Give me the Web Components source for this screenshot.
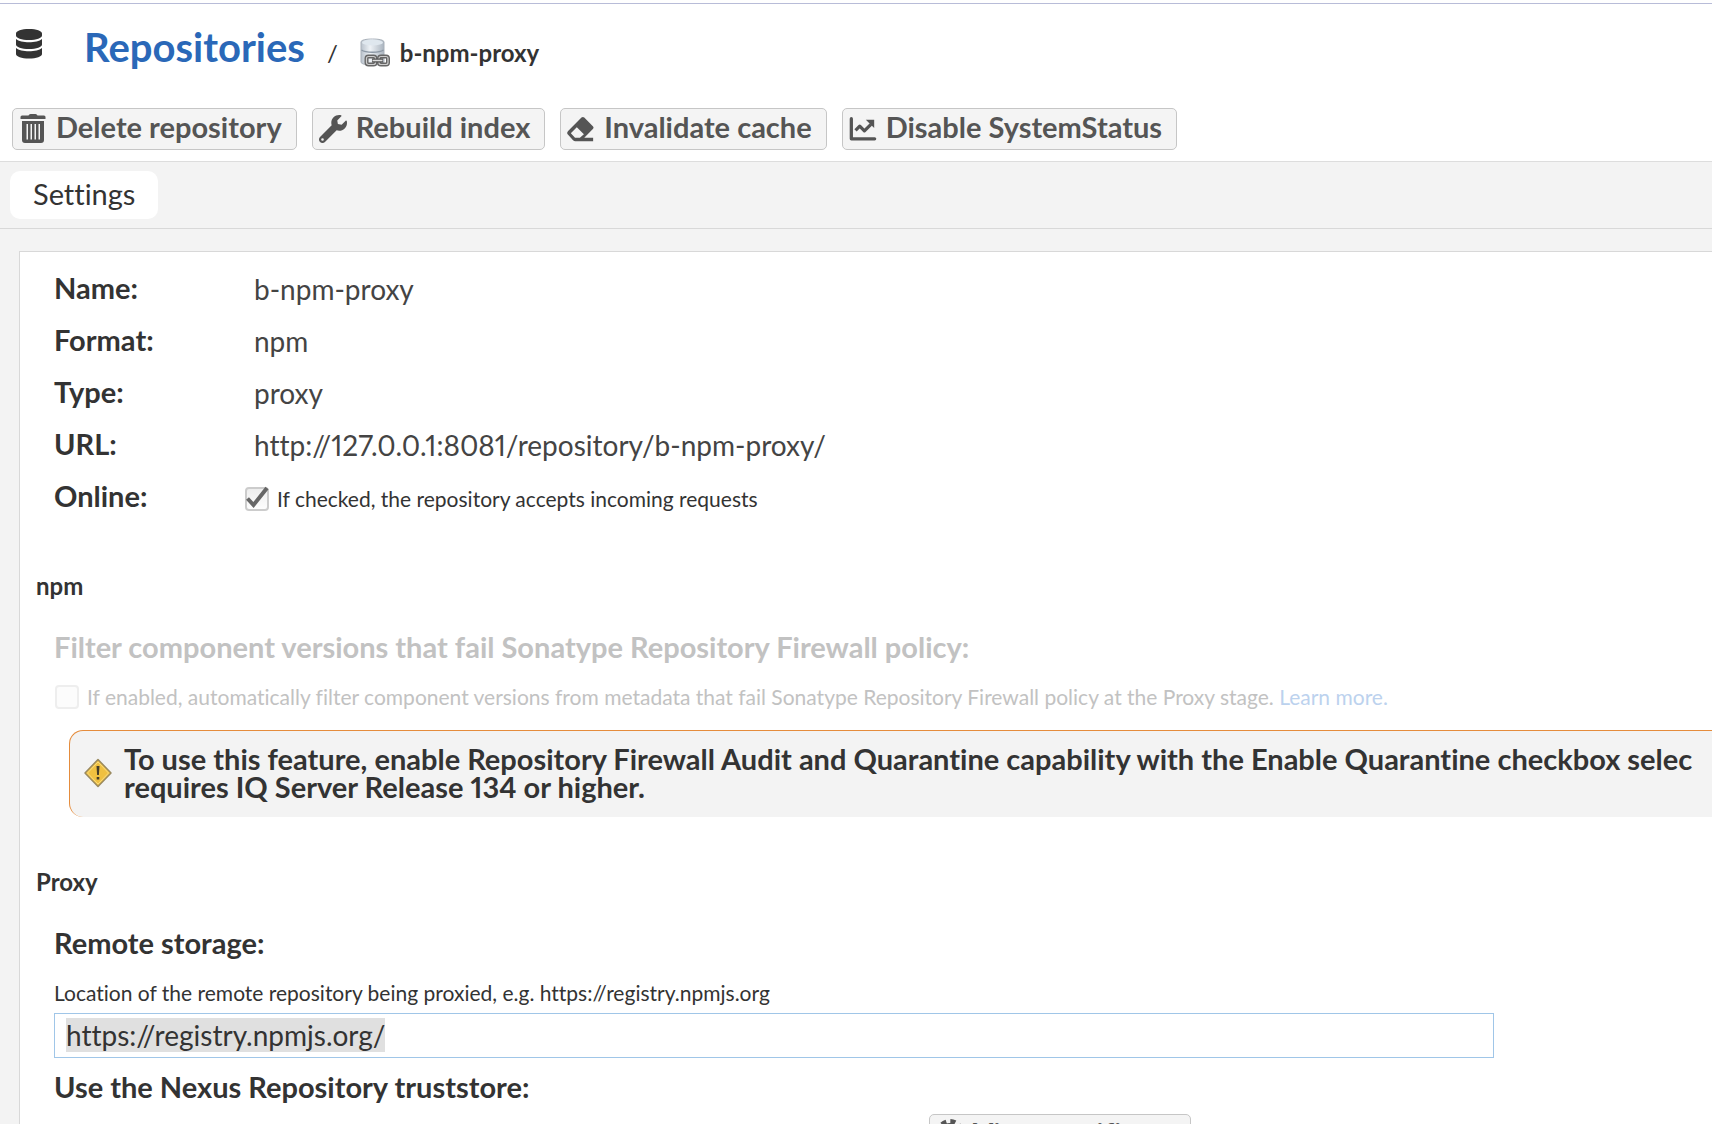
<!DOCTYPE html>
<html lang="en">
<head>
<meta charset="utf-8">
<title>Repositories / b-npm-proxy</title>
<style>
html, body { margin: 0; height: 100%; overflow: hidden; }
body { background: #fff; color: #333; font-family: Lato, "Open Sans", sans-serif; font-size: 28px; font-variant-ligatures: none; font-variant-numeric: proportional-nums; }
</style>
</head>
<body>
<nx-page></nx-page>
<script>
const define = (name, html, setup) => {
  const tpl = document.createElement('template');
  tpl.innerHTML = html;
  customElements.define(name, class extends HTMLElement {
    constructor() {
      super();
      this.attachShadow({ mode: 'open' }).append(tpl.content.cloneNode(true));
    }
    connectedCallback() { if (setup) setup(this, this.shadowRoot); }
  });
};

const icons = {
  database: '<svg viewBox="0 0 26 30"><path fill="#333" d="M0 4.500C0 2 5.500 0 13 0s13 2 13 4.500v2C26 9 20.500 11 13 11S0 9 0 6.500zM0 10c2.500 2.200 7.500 3.200 13 3.200S23.500 12.200 26 10v5.500c0 2.500-5.500 4.500-13 4.500S0 18 0 15.500zM0 19c2.500 2.200 7.500 3.200 13 3.200S23.500 21.200 26 19v6c0 2.500-5.500 4.500-13 4.500S0 27.500 0 25z"/></svg>',
  trash: '<svg viewBox="0 0 28 30"><path fill="#555" fill-rule="evenodd" d="M9.500 1.500Q10 0 11.500 0h5Q18 0 18.500 1.500H25q1.500 0 1.500 1.500v2h-25V3Q1.500 1.500 3 1.500zM3 7h22v19q0 3-3 3H6q-3 0-3-3zm4.500 3v15.500H9V10zm4 0v15.500H13V10zm4 0v15.500H17V10zm4 0v15.500H21V10z"/></svg>',
  wrench: '<svg viewBox="0 0 512 512"><path fill="#555" d="M507.700 109.100c-2.200-9-13.500-12.100-20.100-5.500l-74.400 74.400-67.900-11.300L334 98.900l74.400-74.400c6.600-6.600 3.400-17.900-5.700-20.200-47.400-11.700-99.600.9-136.600 37.900-39.600 39.600-50.500 97.100-34.100 147.200L18.700 402.800c-25 25-25 65.500 0 90.500s65.500 25 90.500 0l213.200-213.200c50.100 16.700 107.500 5.700 147.400-34.200 37.100-37.100 49.700-89.300 37.900-136.800zM64 472a24 24 0 1 1 0-48 24 24 0 0 1 0 48z"/></svg>',
  eraser: '<svg viewBox="0 0 30 28"><path fill="#555" fill-rule="evenodd" d="M15.500 1.800q1.500-1.500 3 0l9.200 9.200q1.500 1.500 0 3L18.500 23.500H28V27H9q-1.500 0-2.500-1L1.200 20.200q-2-2 0-4zM10.500 12 4.600 17.900q-.6.600 0 1.200l4 4.400h5.200l4.300-4z"/></svg>',
  chart: '<svg viewBox="0 0 30 26"><path fill="none" stroke="#555" stroke-width="3.500" stroke-linecap="round" stroke-linejoin="round" d="M2.500 2v21.500h25"/><path fill="none" stroke="#555" stroke-width="3.500" stroke-linejoin="round" d="M7 14.500l4.500-4.500 5 5 7-7"/><path fill="#555" d="M18 3h9v9z"/></svg>',
  cog: '<svg viewBox="0 0 28 28" preserveAspectRatio="xMidYMin"><circle cx="14" cy="14" r="7.500" fill="none" stroke="#555" stroke-width="5"/><circle cx="14" cy="14" r="11.500" fill="none" stroke="#555" stroke-width="5" stroke-dasharray="5 4.032"/></svg>'
};

define('nx-icon', `
<style>
:host { display: block; flex: none; width: var(--w, 28px); height: var(--h, 28px); }
svg { display: block; width: 100%; height: 100%; }
</style>`, (el, root) => {
  if (!root.querySelector('svg')) root.innerHTML += icons[el.getAttribute('name')];
});

define('nx-button', `
<style>
:host { display: block; flex: none; }
button { display: flex; align-items: center; gap: 9px; box-sizing: border-box; height: 42px; padding: 0 14px 0 6px;
  background: #f4f4f4; border: 1px solid #c6c6c6; border-radius: 5px; color: #555; font: bold 29px/36px Lato, sans-serif; font-variant-ligatures: none; white-space: nowrap; }
.text { padding-bottom: 4px; }
</style>
<button type="button"><slot name="icon"></slot><span class="text"><slot></slot></span></button>`);

define('nx-header', `
<style>
:host { display: block; border-top: 1px solid #b8bcd8; }
.crumbs { display: flex; align-items: baseline; height: 84px; padding: 0 16px; }
.db { align-self: flex-start; margin: 25px 42px 0 0; --w: 26px; --h: 30px; }
a { color: #2a68b8; text-decoration: none; font-weight: bold; font-size: 40px; line-height: 86px; }
.sep { font-size: 24px; margin: 0 22px; }
.here { display: flex; align-items: baseline; gap: 10px; margin: 0; font-size: 24px; line-height: 32px; }
.here svg { align-self: center; width: 30px; height: 30px; }
.actions { display: flex; gap: 15px; padding: 20px 12px 11px; }
</style>
<nav class="crumbs" aria-label="Breadcrumb">
  <nx-icon class="db" name="database"></nx-icon>
  <a href="#repositories">Repositories</a>
  <span class="sep">/</span>
  <h1 class="here">
    <svg viewBox="0 0 30 30">
      <defs><linearGradient id="g"><stop offset="0" stop-color="#b9c2cc"/><stop offset=".4" stop-color="#eef2f6"/><stop offset="1" stop-color="#aab4bf"/></linearGradient></defs>
      <path fill="url(#g)" stroke="#a9b1ba" d="M1 4C1 2 6 1 12.500 1S24 2 24 4v20c0 2-5 3-11.500 3S1 26 1 24z"/>
      <ellipse cx="12.500" cy="4.500" rx="10.500" ry="3" fill="#dfe7ee"/>
      <path fill="none" stroke="#8c98a5" stroke-width="1.500" d="M1.500 12c4 3 18 3 22 0"/>
      <g fill="none" stroke="#666" stroke-width="4"><rect x="6.500" y="18.500" width="9" height="8" rx="2"/><rect x="19" y="18.500" width="9" height="8" rx="2"/></g>
      <g fill="none" stroke="#ccc" stroke-width="1.200"><rect x="6.500" y="18.500" width="9" height="8" rx="2"/><rect x="19" y="18.500" width="9" height="8" rx="2"/></g>
      <path stroke="#555" stroke-width="4" d="M12 22.500h11"/><path stroke="#ddd" stroke-width="1.500" d="M12.500 22.500h10"/>
    </svg><span>b-npm-proxy</span></h1>
</nav>
<div class="actions">
  <nx-button><nx-icon slot="icon" name="trash" style="--h:30px"></nx-icon>Delete repository</nx-button>
  <nx-button><nx-icon slot="icon" name="wrench"></nx-icon>Rebuild index</nx-button>
  <nx-button><nx-icon slot="icon" name="eraser"></nx-icon>Invalidate cache</nx-button>
  <nx-button><nx-icon slot="icon" name="chart"></nx-icon>Disable SystemStatus</nx-button>
</div>`);

define('nx-tabs', `
<style>
:host { display: flex; padding: 9px 10px; border-top: 1px solid #ddd; border-bottom: 1px solid #d8d8d8; background: #f3f3f3; }
button { border: 0; border-radius: 10px; background: #fff; color: #333; padding: 0 23px 2px; font: 29px/46px Lato, sans-serif; font-variant-ligatures: none; }
</style>
<button type="button" role="tab" aria-selected="true"><slot></slot></button>`);

define('nx-row', `
<style>
:host { display: grid; grid-template-columns: 200px 1fr; height: 52px; padding-left: 34px; line-height: 52px; }
.l { font-weight: bold; font-size: 29px; }
.v { color: #444; padding-top: 1px; }
</style>
<span class="l"><slot name="label"></slot></span><span class="v"><slot></slot></span>`);

define('nx-check', `
<style>
:host { display: flex; font-size: 21px; line-height: 28px; }
label { display: flex; align-items: center; gap: 8px; white-space: nowrap; color: #333; }
.box { display: grid; flex: none; width: 24px; height: 24px; }
input { grid-area: 1 / 1; appearance: none; box-sizing: border-box; width: 24px; height: 24px; margin: 0; border: 2px solid #ccc; border-radius: 4px; background: linear-gradient(#eee, #fdfdfd); }
svg { grid-area: 1 / 1; display: none; z-index: 1; overflow: visible; }
input:checked + svg { display: block; }
:host([disabled]) input { border-color: #eee; background: #fcfcfc; }
:host([disabled]) label { color: #c2c2c2; }
</style>
<label><span class="box"><input type="checkbox"><svg viewBox="0 0 24 24"><path fill="none" stroke="#666" stroke-width="4" d="M2.500 11.500l6 6.500L22 1"/></svg></span><span><slot></slot></span></label>`,
(el, root) => {
  const box = root.querySelector('input');
  box.checked = el.hasAttribute('checked');
  box.disabled = el.hasAttribute('disabled');
});

define('nx-section', `
<style>
:host { display: block; margin-top: 48px; }
h2 { margin: 0 0 27px; padding-left: 16px; font-size: 24px; line-height: 32px; }
.body { padding-left: 34px; }
</style>
<h2><slot name="title"></slot></h2>
<div class="body"><slot></slot></div>`);

define('nx-alert', `
<style>
:host { display: flex; align-items: center; gap: 12px; box-sizing: border-box; height: 87px; margin: 19px 0 0 15px; padding: 0 0 3px 14px;
  border: 1px solid #e58c3c; border-width: 1px 0 0 1px; border-radius: 14px 0 0 14px; background: #f3f3f3; overflow: hidden;
  font-weight: bold; font-size: 29px; line-height: 28px; white-space: nowrap; }
svg { flex: none; width: 28px; height: 30px; }
</style>
<svg viewBox="0 0 28 30"><path fill="#f0c040" stroke="#9a8a60" stroke-width="1.500" stroke-linejoin="round" d="M14 1.500 27 15 14 28.500 1 15z"/><path fill="none" stroke="#f9dc80" d="M14 4 24.500 15 14 26 3.500 15z"/><path fill="#443c28" d="M12.500 8h3l-.6 9h-1.800zM12.700 19h2.600v2.600h-2.600z"/></svg>
<div><slot></slot></div>`);

define('nx-remote', `
<style>
:host { display: block; max-width: 1440px; margin-right: 34px; }
label { display: block; }
.t { display: block; font-weight: bold; font-size: 29px; line-height: 36px; }
.hint { display: block; margin: 18px 0 6px; font-size: 21px; line-height: 28px; }
input { display: block; box-sizing: border-box; width: 100%; height: 45px; padding: 0 11px 2px; border: 1px solid #a0c6e8; outline: 0; background: #fff; color: #333; font: 28px/34px Lato, sans-serif; font-variant-ligatures: none; }
input::selection { background: #e0e0e0; color: #333; }
</style>
<label for="url"><span class="t">Remote storage:</span><span class="hint">Location of the remote repository being proxied, e.g. https://registry.npmjs.org</span></label>
<input id="url" type="text" value="https://registry.npmjs.org/">`,
(el, root) => { const i = root.querySelector('input'); i.focus({ preventScroll: true }); i.select(); });

define('nx-page', `
<style>
:host { display: flex; flex-direction: column; height: 100vh; overflow: hidden; background: #fff; padding-top: 3px; box-sizing: border-box; }
nx-header, nx-tabs { flex: none; }
main { flex: 1; min-height: 0; padding: 22px 0 0 19px; background: #f3f3f3; overflow: hidden; }
.panel { min-height: 100%; border: 1px solid #d8d8d8; border-width: 1px 0 0 1px; background: #fff; padding-top: 10px; }
.online { box-sizing: border-box; margin-left: -9px; height: 52px; padding-top: 4px; align-items: center; }
.sub { font-size: 29px; line-height: 36px; font-weight: bold; margin-bottom: 18px; }
.off { color: #c2c2c2; }
.trust { margin: 11px 0 9px; }
a { color: #bcd2ee; text-decoration: none; }
.cert { display: flex; padding-left: 875px; }
.indent { margin-left: 1px; }
.gap { margin-top: 49px; }
</style>
<nx-header></nx-header>
<nx-tabs>Settings</nx-tabs>
<main><div class="panel">
  <nx-row><span slot="label">Name:</span>b-npm-proxy</nx-row>
  <nx-row><span slot="label">Format:</span>npm</nx-row>
  <nx-row><span slot="label">Type:</span>proxy</nx-row>
  <nx-row><span slot="label">URL:</span>http://127.0.0.1:8081/repository/b-npm-proxy/</nx-row>
  <nx-row><span slot="label">Online:</span><nx-check class="online" checked>If checked, the repository accepts incoming requests</nx-check></nx-row>
  <nx-section><span slot="title">npm</span>
    <div class="sub off">Filter component versions that fail Sonatype Repository Firewall policy:</div>
    <nx-check class="indent" disabled>If enabled, automatically filter component versions from metadata that fail Sonatype Repository Firewall policy at the Proxy stage. <a href="#learn">Learn more.</a></nx-check>
    <nx-alert>To use this feature, enable Repository Firewall Audit and Quarantine capability with the Enable Quarantine checkbox selec<br>requires IQ Server Release 134 or higher.</nx-alert>
  </nx-section>
  <nx-section class="gap"><span slot="title">Proxy</span>
    <nx-remote></nx-remote>
    <div class="sub trust">Use the Nexus Repository truststore:</div>
    <div class="cert"><nx-button><nx-icon slot="icon" name="cog" style="--h:32px"></nx-icon>View certificate</nx-button></div>
  </nx-section>
</div></main>`);
</script>
</body>
</html>
